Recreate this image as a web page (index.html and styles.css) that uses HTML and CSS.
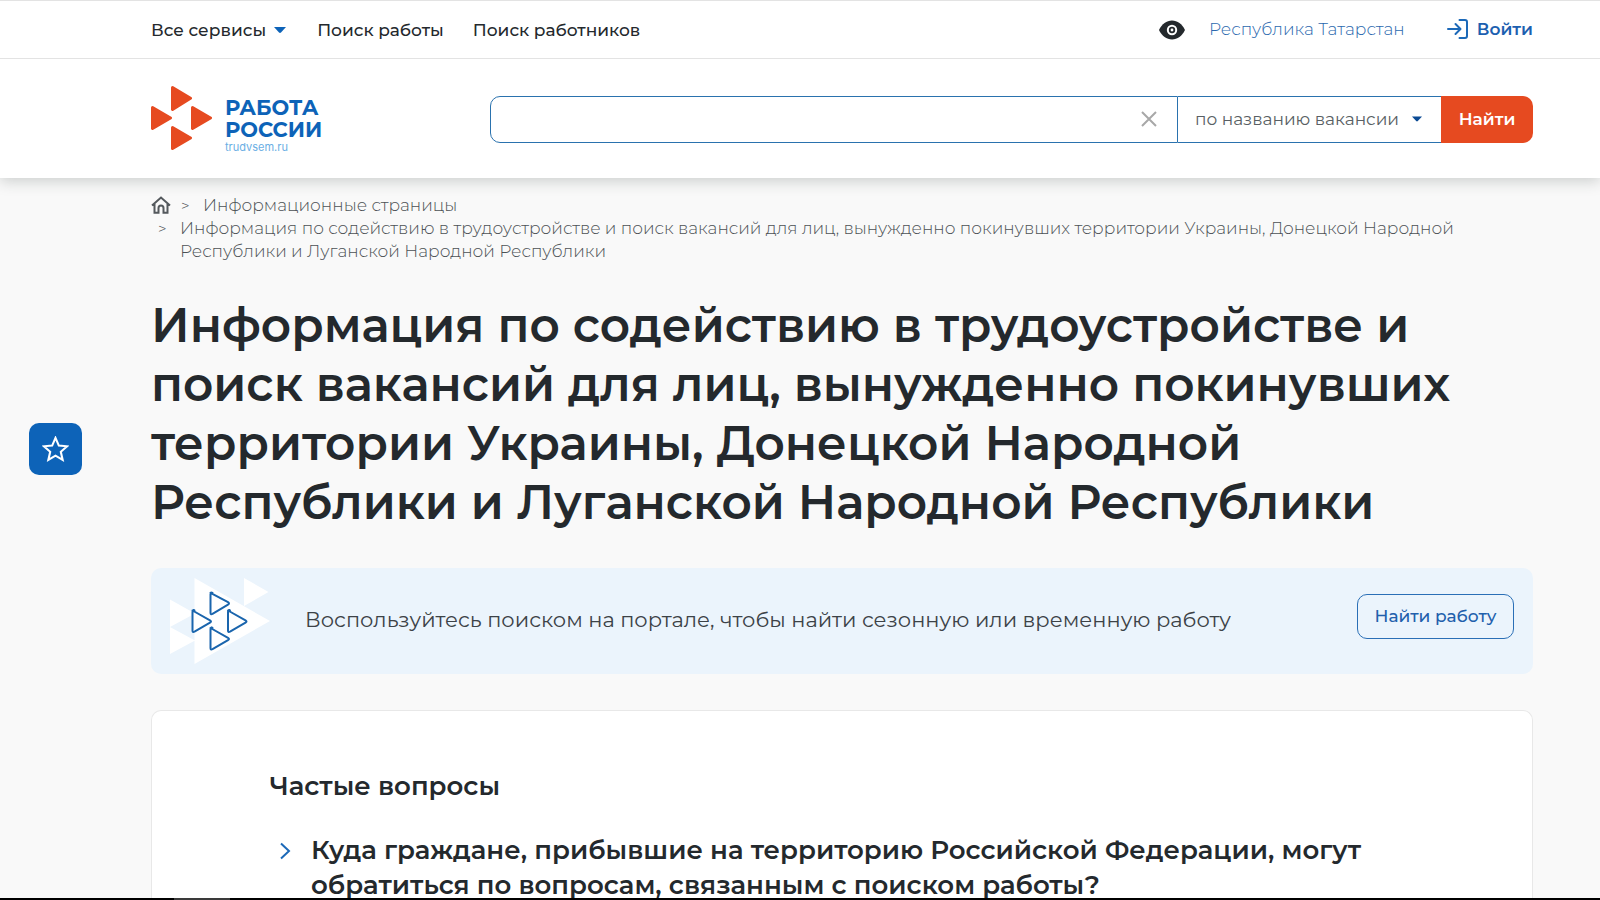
FILE: index.html
```html
<!DOCTYPE html>
<html lang="ru">
<head>
<meta charset="utf-8">
<meta name="viewport" content="width=device-width, initial-scale=1">
<title>Работа России</title>
<link rel="stylesheet" href="styles.css">
</head>
<body>
<header class="header">
  <div class="topbar container">
    <nav class="nav">
      <button class="nav-item nav-button" type="button">Все сервисы
        <svg class="caret" viewBox="0 0 12 6" aria-hidden="true"><path d="M0 0h12L7 5.500q-1 .8-2 0z"/></svg>
      </button>
      <a class="nav-item" href="#">Поиск работы</a>
      <a class="nav-item" href="#">Поиск работников</a>
    </nav>
    <div class="user">
      <button class="eye-button" type="button" aria-label="Версия для слабовидящих">
        <svg class="eye" viewBox="0 0 26 20" aria-hidden="true"><path fill="#24292d" d="M0 10C3 4 7.500 .5 13 .5S23 4 26 10c-3 6-7.500 9.500-13 9.500S3 16 0 10z"/><circle cx="13" cy="10" r="5.200" fill="#fff"/><circle cx="13" cy="10" r="3.200" fill="#24292d"/><circle cx="13" cy="10" r="1.400" fill="#fff"/></svg>
      </button>
      <a class="region" href="#">Республика Татарстан</a>
      <a class="login" href="#">
        <svg class="login-icon" viewBox="0 0 22 20" aria-hidden="true"><path d="M1 10h12M8.500 5l5 5-5 5M12.500 1H18a2 2 0 0 1 2 2v14a2 2 0 0 1-2 2h-5.500"/></svg>
        Войти
      </a>
    </div>
  </div>
  <div class="search-row">
    <div class="container search-inner">
      <a class="logo" href="#">
        <svg class="logo-mark" viewBox="0 0 61 64" aria-hidden="true"><path d="M21.500 1.500 39.500 12.300 21.500 23.500zM1.500 21.500 19.500 32 1.500 42.500zM41.500 21.500 59.500 32 41.500 42.500zM21.500 41.500 39.500 52 21.500 62.500z"/></svg>
        <span class="logo-text">
          <span class="logo-name">РАБОТА</span>
          <span class="logo-name">РОССИИ</span>
          <span class="logo-site">trudvsem.ru</span>
        </span>
      </a>
      <form class="search">
        <div class="search-field">
          <input class="search-input" type="text" aria-label="Поиск">
          <button class="clear" type="button" aria-label="Очистить"><svg viewBox="0 0 16 16" aria-hidden="true"><path d="M1 1l14 14M15 1 1 15"/></svg></button>
        </div>
        <div class="search-kind">
          <select class="kind-select" aria-label="Область поиска"><option>по названию вакансии</option></select>
          <svg class="kind-caret" viewBox="0 0 12 6" aria-hidden="true"><path d="M0 0h12L7 5.500q-1 .8-2 0z"/></svg>
        </div>
        <button class="search-submit" type="submit">Найти</button>
      </form>
    </div>
  </div>
</header>

<main class="container page">
  <nav class="crumbs" aria-label="Навигационная цепочка">
    <div class="crumb-row">
      <a class="home" href="#" aria-label="Главная"><svg viewBox="0 0 20 18" aria-hidden="true"><path d="M1 9.500 10 1.500l9 8M3.500 8v8.800h4V12a2.500 2.500 0 0 1 5 0v4.800h4V8"/></svg></a>
      <span class="sep">&gt;</span>
      <a class="crumb" href="#">Информационные страницы</a>
    </div>
    <div class="crumb-row crumb-current">
      <span class="sep">&gt;</span>
      <span class="crumb">Информация по содействию в трудоустройстве и поиск вакансий для лиц, вынужденно покинувших территории Украины, Донецкой Народной Республики и Луганской Народной Республики</span>
    </div>
  </nav>

  <h1 class="title">Информация по содействию в трудоустройстве и поиск вакансий для лиц, вынужденно покинувших территории Украины, Донецкой Народной Республики и Луганской Народной Республики</h1>

  <section class="banner">
    <svg class="banner-art" viewBox="0 0 100 88" aria-hidden="true">
      <path fill="#fff" d="M24.500 1 100 44 24.500 87zM74 1l24.500 14L74 29zM0 22.500 25 36.500 0 50zM0 50l25 13.500L0 77z"/>
      <path class="art-line" d="M40.500 15.800 58 25.200q2 1.200 0 2.400L42.500 36.900q-2 1-2-1.200V17.500q0-2.700 2-1.700zM22.500 33.500 40 43.300q2 1.200 0 2.400L24.500 54.600q-2 1-2-1.200V35q0-2.700 2-1.700zM58 33.500 75.500 43.300q2 1.200 0 2.400L60 54.600q-2 1-2-1.200V35q0-2.700 2-1.700zM40.500 51 58 60.800q2 1.200 0 2.400L42.500 72.100q-2 1-2-1.200V52.500q0-2.700 2-1.700z"/>
    </svg>
    <p class="banner-text">Воспользуйтесь поиском на портале, чтобы найти сезонную или временную работу</p>
    <button class="banner-button" type="button">Найти работу</button>
  </section>

  <section class="faq">
    <h2 class="faq-title">Частые вопросы</h2>
    <button class="question" type="button">
      <svg class="chevron" viewBox="0 0 12 18" aria-hidden="true"><path d="M2 1.500 10 9l-8 7.500"/></svg>
      <span>Куда граждане, прибывшие на территорию Российской Федерации, могут обратиться по вопросам, связанным с поиском работы?</span>
    </button>
  </section>
</main>

<button class="favorite" type="button" aria-label="Избранное"><svg viewBox="0 0 26 26" aria-hidden="true"><path d="M13 1.800l3.200 7.400 8 .7-6.100 5.300 1.800 7.900L13 19l-6.900 4.100 1.800-7.900L1.800 9.900l8-.7z"/></svg></button>
<div class="bottom-edge"></div>
</body>
</html>
```
FILE: styles.css
```css
* { box-sizing: border-box; }

body {
  margin: 0;
  min-height: 100vh;
  background: #f9f9f9;
  color: #24292d;
  font-family: Montserrat, Inter, "Noto Sans", sans-serif;
  font-size: 16px;
}

a { color: inherit; text-decoration: none; }
button, input, select { font: inherit; color: inherit; }
button { border: 0; padding: 0; background: none; cursor: pointer; }
svg { display: block; flex: none; }

.container { padding: 0 67px 0 151px; }

.header {
  background: #fff;
  border-top: 1px solid #e3e3e3;
  box-shadow: 0 3px 14px rgba(36, 50, 45, 0.22);
}

.topbar {
  display: flex;
  justify-content: space-between;
  align-items: center;
  height: 57px;
}

.nav, .user { display: flex; align-items: center; }
.nav { gap: 29px; }
.nav-item { font-size: 17px; font-weight: 500; white-space: nowrap; }
.nav-button { display: flex; align-items: center; gap: 8px; margin-right: 2px; }
.caret { width: 12px; height: 6px; fill: #0d63b8; }
.user { padding-bottom: 2px; }
.eye { width: 26px; height: 20px; margin-top: 3px; }
.region { margin-left: 24px; color: #2b68ae; font-weight: 300; font-size: 17px; }
.login { display: flex; align-items: center; gap: 8px; margin-left: 42px; color: #1c60b0; font-weight: 600; font-size: 17px; }
.login-icon { width: 22px; height: 20px; fill: none; stroke: #1c69b8; stroke-width: 2; stroke-linecap: round; stroke-linejoin: round; }

.search-row { border-top: 1px solid #e3e3e3; }
.search-inner { display: flex; align-items: center; height: 119px; }

.logo { display: flex; align-items: center; gap: 13px; width: 339px; flex: none; }
.logo-mark { width: 61px; height: 64px; margin-bottom: 2px; fill: #e64a20; stroke: #e64a20; stroke-width: 3; stroke-linejoin: round; }
.logo-text { display: flex; flex-direction: column; padding-top: 12px; }
.logo-name { color: #0d63b8; font-size: 21px; line-height: 22px; font-weight: 700; }
.logo-site { color: #6aaee4; font-family: Inter, sans-serif; font-size: 11px; line-height: 12px; }

.search { display: flex; flex: 1; height: 47px; margin-top: 1px; }
.search-field {
  display: flex;
  align-items: center;
  flex: 1;
  border: 1px solid #2a72ae;
  border-radius: 10px 0 0 10px;
  padding-right: 20px;
}
.search-input { flex: 1; min-width: 0; height: 100%; border: 0; outline: 0; background: none; padding: 0 16px; }
.clear svg { width: 16px; height: 16px; stroke: #a8a8a8; stroke-width: 2; }
.search-kind {
  display: flex;
  align-items: center;
  width: 263px;
  border: solid #2a72ae;
  border-width: 1px 0;
  padding: 0 19px 0 17px;
}
.kind-select { appearance: none; flex: 1; min-width: 0; border: 0; padding: 0; background: none; color: #595f64; font-size: 17px; }
.kind-caret { width: 10px; height: 6px; fill: #0b4a94; }
.search-submit { width: 92px; border-radius: 0 10px 10px 0; background: #e64a20; color: #fff; font-weight: 600; font-size: 17px; }

.page { padding-top: 16px; }
.crumbs { color: #4c5155; font-size: 17px; font-weight: 300; line-height: 23px; }
.crumb-row { display: flex; }
.home { display: flex; align-items: center; width: 30px; }
.home svg { width: 20px; height: 18px; margin-bottom: 2px; fill: none; stroke: #54595d; stroke-width: 2; }
.sep { width: 22px; font-size: 15px; }
.crumb-current { padding: 0 70px 0 7px; }
.crumb-current .sep { flex: none; }

.title { margin: 33px 0 0; font-size: 47px; line-height: 59px; font-weight: 600; }

.banner {
  display: flex;
  align-items: center;
  margin-top: 36px;
  height: 106px;
  padding: 0 19px;
  border-radius: 10px;
  background: #ebf4fc;
}
.banner-art { width: 100px; height: 88px; }
.art-line { fill: #fff; stroke: #1a65ad; stroke-width: 2; stroke-linejoin: round; }
.banner-text { flex: 1; margin: 0 0 3px 35px; color: #3c4247; font-size: 21px; font-weight: 400; white-space: nowrap; }
.banner-button { width: 157px; height: 45px; margin-bottom: 10px; border: 1px solid #2a6fb6; border-radius: 10px; color: #2260ac; font-weight: 500; font-size: 17px; }

.faq { margin-top: 36px; padding: 57px 118px 24px; border: 1px solid #e8e8e8; border-bottom: 0; border-radius: 10px 10px 0 0; background: #fff; }
.faq-title { margin: 0; font-size: 26px; line-height: 36px; font-weight: 600; }
.question { display: flex; align-items: flex-start; gap: 20px; margin-top: 29px; padding-left: 9px; text-align: left; font-size: 26px; line-height: 35px; font-weight: 600; }
.chevron { width: 12px; height: 18px; margin-top: 9px; fill: none; stroke: #1c69b8; stroke-width: 2; }

.favorite {
  position: fixed;
  left: 29px;
  top: 423px;
  display: flex;
  align-items: center;
  justify-content: center;
  width: 53px;
  height: 52px;
  border-radius: 10px;
  background: #0d63b8;
}
.favorite svg { width: 27px; height: 27px; fill: none; stroke: #fff; stroke-width: 2; }

.bottom-edge {
  position: fixed;
  inset: auto 0 0;
  height: 2px;
  background: linear-gradient(to right, #000 174px, #3a3a3a 174px 230px, #000 230px);
}
```
